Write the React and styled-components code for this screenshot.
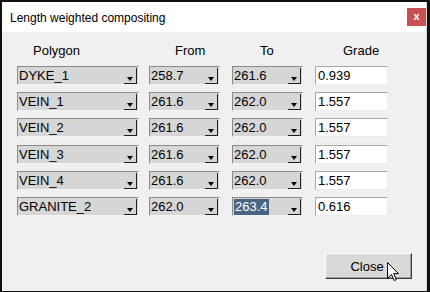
import React from "react";
import styled, { createGlobalStyle } from "styled-components";

const Global = createGlobalStyle`
  html, body { margin: 0; padding: 0; background: #f0f0f0; }
  * { box-sizing: border-box; }
`;

const Frame = styled.div`
  position: relative;
  width: 430px;
  height: 292px;
  display: flex;
  flex-direction: column;
  background: #f0f0f0;
  border-top: 2px solid #111;
  border-left: 2px solid #111;
  border-right: 3px solid #111;
  border-bottom: 1px solid #111;
  font-family: "Liberation Sans", Arial, sans-serif;
  overflow: hidden;
`;

const TitleBar = styled.div`
  height: 30px;
  flex: none;
  background: #ffffff;
  display: flex;
  align-items: center;
  justify-content: space-between;
  padding-left: 8px;
  border-right: 1px solid #d8d8d8;
`;

const Title = styled.span`
  font-size: 12px;
  color: #000;
  margin-top: 1px;
`;

const CloseX = styled.div`
  width: 19px;
  height: 18px;
  margin-top: -1px;
  background: #c75050;
  color: #fff;
  font-weight: bold;
  font-size: 11px;
  display: flex;
  align-items: center;
  justify-content: center;
  padding-bottom: 2px;
`;

const Body = styled.div`
  flex: 1;
  display: flex;
  flex-direction: column;
  padding: 10px 14px 12px 15px;
  border-right: 1px solid #d8d8d8;
`;

const Grid = styled.div`
  display: grid;
  grid-template-columns: 132px 83px 83px 73px;
  grid-auto-rows: 20px;
  row-gap: 6.4px;
  align-items: center;
`;

const HeadRow = styled.div`
  display: grid;
  grid-template-columns: 132px 83px 83px 73px;
  height: 16px;
  margin-bottom: 7px;
  align-items: center;
`;

const Head = styled.span`
  font-size: 13px;
  color: #000;
  padding-left: ${(p) => p.$indent}px;
  white-space: nowrap;
`;

const Combo = styled.div`
  width: ${(p) => p.$w}px;
  height: 19px;
  display: flex;
  align-items: stretch;
  background: #d6d6d6;
  border-top: 1px solid #8a8a8a;
  border-left: 1px solid #8a8a8a;
  border-bottom: 1px solid #f4f4f4;
  border-right: 1px solid #f4f4f4;
`;

const ComboText = styled.div`
  flex: 1;
  display: flex;
  align-items: center;
  padding-left: 1px;
  font-size: 13px;
  color: #000;
  white-space: nowrap;
  overflow: hidden;
`;

const Selected = styled.span`
  background: #4a6584;
  color: #fff;
  padding: 0 1px;
  line-height: 16px;
`;

const DropButton = styled.div`
  width: 13px;
  flex: none;
  margin: 1px 1px 0 0;
  display: flex;
  align-items: flex-end;
  justify-content: center;
  border-right: 1px solid #202020;
  border-bottom: 1px solid #202020;
  padding-bottom: 2px;
`;

const Arrow = styled.div`
  width: 0;
  height: 0;
  border-left: 3.5px solid transparent;
  border-right: 3.5px solid transparent;
  border-top: 4px solid #000;
`;

const Input = styled.div`
  width: 73px;
  height: 19px;
  background: #fff;
  border-top: 1px solid #a8a8a8;
  border-left: 1px solid #a8a8a8;
  border-bottom: 1px solid #ececec;
  border-right: 1px solid #ececec;
  font-size: 13px;
  color: #000;
  display: flex;
  align-items: center;
  padding-left: 2px;
`;

const Footer = styled.div`
  margin-top: auto;
  display: flex;
  justify-content: flex-end;
`;

const Button = styled.div`
  position: relative;
  width: 87px;
  height: 26px;
  background: #d9d9d9;
  border-top: 1px solid #ffffff;
  border-left: 1px solid #ffffff;
  border-right: 1px solid #3c3c3c;
  border-bottom: 1px solid #3c3c3c;
  box-shadow: inset -1px -1px 0 #a0a0a0;
  font-size: 13px;
  color: #000;
  display: flex;
  align-items: center;
  justify-content: center;
  padding-right: 3px;
`;

const Cursor = styled.svg`
  position: absolute;
  left: 61px;
  top: 8px;
  overflow: visible;
`;

const rows = [
  ["DYKE_1", "258.7", "261.6", "0.939"],
  ["VEIN_1", "261.6", "262.0", "1.557"],
  ["VEIN_2", "261.6", "262.0", "1.557"],
  ["VEIN_3", "261.6", "262.0", "1.557"],
  ["VEIN_4", "261.6", "262.0", "1.557"],
  ["GRANITE_2", "262.0", "263.4", "0.616"],
];

function ComboBox({ w, value, selected }) {
  return (
    <Combo $w={w}>
      <ComboText>{selected ? <Selected>{value}</Selected> : value}</ComboText>
      <DropButton>
        <Arrow />
      </DropButton>
    </Combo>
  );
}

export default function App() {
  return (
    <>
      <Global />
      <Frame>
        <TitleBar>
          <Title>Length weighted compositing</Title>
          <CloseX>x</CloseX>
        </TitleBar>
        <Body>
          <HeadRow>
            <Head $indent={16}>Polygon</Head>
            <Head $indent={26}>From</Head>
            <Head $indent={28}>To</Head>
            <Head $indent={28}>Grade</Head>
          </HeadRow>
          <Grid>
            {rows.map((r, i) => (
              <React.Fragment key={i}>
                <ComboBox w={122} value={r[0]} />
                <ComboBox w={71} value={r[1]} />
                <ComboBox w={71} value={r[2]} selected={i === rows.length - 1} />
                <Input>{r[3]}</Input>
              </React.Fragment>
            ))}
          </Grid>
          <Footer>
            <Button>
              Close
              <Cursor width="12" height="20" viewBox="0 0 12 20">
                <path
                  d="M0.5 0.5 L0.5 16.5 L4.5 12.5 L7.2 18.5 L9.3 17.6 L6.7 11.6 L11.5 11.6 Z"
                  fill="#fff"
                  stroke="#000"
                  strokeWidth="1"
                  strokeLinejoin="miter"
                />
              </Cursor>
            </Button>
          </Footer>
        </Body>
      </Frame>
    </>
  );
}
